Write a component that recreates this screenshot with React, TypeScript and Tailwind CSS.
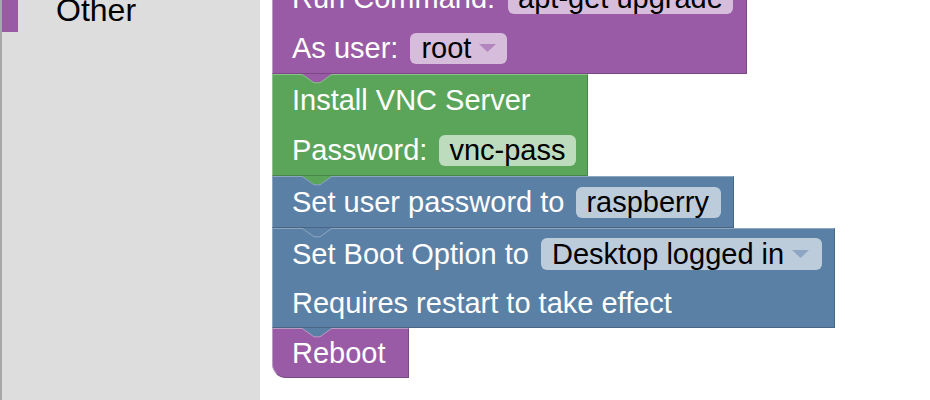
import React from "react";

function Notch({ fill, stroke }: { fill: string; stroke: string }) {
  return (
    <svg
      className="absolute left-[29px] top-[-1px]"
      width="32"
      height="10"
      viewBox="0 0 32 10"
    >
      <path d="M0 0 L12 8.5 L18 8.5 L30 0 Z" fill={fill} />
      <path
        d="M0.3 0.5 L12 8.8 L18 8.8 L29.7 0.5"
        fill="none"
        stroke={stroke}
        strokeWidth="1"
      />
    </svg>
  );
}

function Arrow({ color }: { color: string }) {
  return (
    <svg className="ml-[8px]" width="17" height="8" viewBox="0 0 17 8">
      <path d="M0 0 L17 0 L8.5 8 Z" fill={color} />
    </svg>
  );
}

export default function App() {
  return (
    <div className="flex w-[930px] h-[400px] overflow-hidden bg-white font-['Liberation_Sans',Arial,sans-serif]">
      <aside className="w-[260px] h-full shrink-0 bg-[#dddddd] border-l-2 border-l-[#a8a8a8]">
        <div className="flex h-[32px]">
          <div className="w-[16px] h-[32px] bg-[#995ba5]" />
          <span className="ml-[38px] -mt-[6px] text-[32px] leading-none text-black">
            Other
          </span>
        </div>
      </aside>

      <main className="flex flex-col items-start pl-[12px] -mt-[28px] text-[29px] leading-none text-white">
        {/* Purple run command block */}
        <div className="relative w-[475px] bg-[#995ba5] border border-t-[#b89dc0] border-l-[#b89dc0] border-r-[#7a4984] border-b-[#7a4984] pl-[19px]">
          <div className="flex h-[50px] items-center">
            <span>Run Command:</span>
            <span className="ml-[13px] flex h-[31px] w-[225px] items-center rounded-[6px] bg-[#d6bddb] px-[10px] text-black">
              apt-get upgrade
            </span>
          </div>
          <div className="flex h-[50px] items-center">
            <span>As user:</span>
            <span className="ml-[12px] flex h-[31px] w-[97px] items-center rounded-[6px] bg-[#d6bddb] pl-[11px] text-black">
              root
              <Arrow color="#b387bd" />
            </span>
          </div>
        </div>

        {/* Green VNC block */}
        <div className="relative w-[316px] bg-[#5ba55b] border border-t-[#8cc08c] border-l-[#8cc08c] border-r-[#498449] border-b-[#498449] pl-[19px]">
          <Notch fill="#995ba5" stroke="#8cc08c" />
          <div className="flex h-[50px] items-center">
            <span>Install VNC Server</span>
          </div>
          <div className="flex h-[50px] items-center">
            <span>Password:</span>
            <span className="ml-[12px] flex h-[31px] w-[137px] items-center rounded-[6px] bg-[#bddbbd] px-[10px] text-black">
              vnc-pass
            </span>
          </div>
        </div>

        {/* Blue set password block */}
        <div className="relative w-[462px] bg-[#5b80a5] border border-t-[#8ca6c0] border-l-[#8ca6c0] border-r-[#496684] border-b-[#496684] pl-[19px]">
          <Notch fill="#5ba55b" stroke="#8ca6c0" />
          <div className="flex h-[50px] items-center">
            <span>Set user password to</span>
            <span className="ml-[12px] flex h-[31px] w-[145px] items-center rounded-[6px] bg-[#bdccdb] px-[10px] text-black">
              raspberry
            </span>
          </div>
        </div>

        {/* Blue boot option block */}
        <div className="relative w-[563px] bg-[#5b80a5] border border-t-[#8ca6c0] border-l-[#8ca6c0] border-r-[#496684] border-b-[#496684] pl-[19px]">
          <Notch fill="#5b80a5" stroke="#8ca6c0" />
          <div className="flex h-[50px] items-center">
            <span>Set Boot Option to</span>
            <span className="ml-[12px] flex h-[32px] w-[281px] items-center rounded-[6px] bg-[#bdccdb] pl-[11px] text-black">
              Desktop logged in
              <Arrow color="#8ca6c4" />
            </span>
          </div>
          <div className="flex h-[48px] items-center">
            <span>Requires restart to take effect</span>
          </div>
        </div>

        {/* Purple reboot block */}
        <div className="relative w-[137px] bg-[#995ba5] border border-t-[#b89dc0] border-l-[#b89dc0] border-r-[#7a4984] border-b-[#7a4984] rounded-bl-[14px] pl-[19px]">
          <Notch fill="#5b80a5" stroke="#b89dc0" />
          <div className="flex h-[48px] items-center">
            <span>Reboot</span>
          </div>
        </div>
      </main>
    </div>
  );
}
